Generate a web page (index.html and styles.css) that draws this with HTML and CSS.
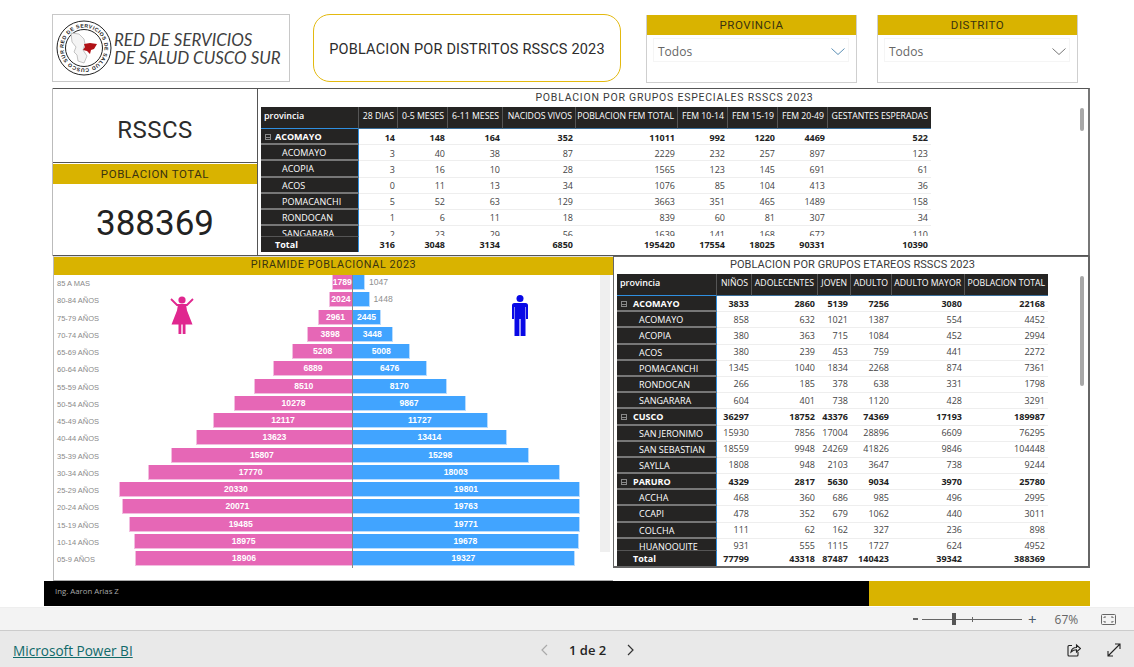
FILE: index.html
```html
<!DOCTYPE html>
<html lang="es">
<head>
<meta charset="utf-8">
<title>Poblacion RSSCS 2023</title>
<link rel="stylesheet" href="styles.css">
</head>
<body>
<main class="report">
  <section class="row-top">
    <div class="logo">
      <svg class="seal" viewBox="0 0 56 56" width="56" height="56">
        <circle cx="28" cy="28" r="27" fill="#fff" stroke="#222" stroke-width="1"/>
        <circle cx="28" cy="28" r="18.5" fill="#fff" stroke="#222" stroke-width="1"/>
        <path id="sealarc" d="M28 28 m-20.5 0 a20.5 20.5 0 1 1 41 0 a20.5 20.5 0 1 1 -41 0" fill="none"/>
        <text class="seal-text"><textPath href="#sealarc" textLength="126">RED DE SERVICIOS DE SALUD CUSCO SUR</textPath></text>
        <path d="M15 13l8 1 5 5 1 5-2 6 4 6-3 7-6-2-1-6-3-3 2-5-4-5z" fill="#f4f4f4" stroke="#aaa" stroke-width=".7"/>
        <path d="M28 24l6-1 7 1-3 5-3 1-1 4-3-3-4-1 2-3z" fill="#b11116"/>
      </svg>
      <p class="logo-text">RED DE SERVICIOS<br>DE SALUD CUSCO SUR</p>
    </div>
    <h1 class="main-title">POBLACION POR DISTRITOS RSSCS 2023</h1>
    <div class="slicer slicer-prov">
      <div class="gold-head">PROVINCIA</div>
      <div class="drop"><span>Todos</span>
        <svg viewBox="0 0 14 7" width="14" height="7"><path d="M.5.5L7 6.5 13.5.5" fill="none" stroke="#5b8fb5" stroke-width="1"/></svg>
      </div>
    </div>
    <div class="slicer slicer-dist">
      <div class="gold-head">DISTRITO</div>
      <div class="drop"><span>Todos</span>
        <svg viewBox="0 0 14 7" width="14" height="7"><path d="M.5.5L7 6.5 13.5.5" fill="none" stroke="#777" stroke-width="1"/></svg>
      </div>
    </div>
  </section>

  <section class="row-mid">
    <div class="kpis">
      <div class="kpi-name">RSSCS</div>
      <div class="gold-head kpi-head">POBLACION TOTAL</div>
      <div class="kpi-value">388369</div>
    </div>
    <div class="panel panel-esp">
      <h2 class="panel-title">POBLACION POR GRUPOS ESPECIALES RSSCS 2023</h2>
      <div class="matrix m1">
        <div class="mrow mhead"><span>provincia</span><span>28 DIAS</span><span>0-5 MESES</span><span>6-11 MESES</span><span>NACIDOS VIVOS</span><span>POBLACION FEM TOTAL</span><span>FEM 10-14</span><span>FEM 15-19</span><span>FEM 20-49</span><span>GESTANTES ESPERADAS</span></div>
        <div class="mbody">
          <div class="mrow parent"><span><i class="minus"></i>ACOMAYO</span><span>14</span><span>148</span><span>164</span><span>352</span><span>11011</span><span>992</span><span>1220</span><span>4469</span><span>522</span></div>
          <div class="mrow"><span>ACOMAYO</span><span>3</span><span>40</span><span>38</span><span>87</span><span>2229</span><span>232</span><span>257</span><span>897</span><span>123</span></div>
          <div class="mrow"><span>ACOPIA</span><span>3</span><span>16</span><span>10</span><span>28</span><span>1565</span><span>123</span><span>145</span><span>691</span><span>61</span></div>
          <div class="mrow"><span>ACOS</span><span>0</span><span>11</span><span>13</span><span>34</span><span>1076</span><span>85</span><span>104</span><span>413</span><span>36</span></div>
          <div class="mrow"><span>POMACANCHI</span><span>5</span><span>52</span><span>63</span><span>129</span><span>3663</span><span>351</span><span>465</span><span>1489</span><span>158</span></div>
          <div class="mrow"><span>RONDOCAN</span><span>1</span><span>6</span><span>11</span><span>18</span><span>839</span><span>60</span><span>81</span><span>307</span><span>34</span></div>
          <div class="mrow"><span>SANGARARA</span><span>2</span><span>23</span><span>29</span><span>56</span><span>1639</span><span>141</span><span>168</span><span>672</span><span>110</span></div>
        </div>
        <div class="mrow mtotal"><span>Total</span><span>316</span><span>3048</span><span>3134</span><span>6850</span><span>195420</span><span>17554</span><span>18025</span><span>90331</span><span>10390</span></div>
      </div>
      <div class="scroll scroll-esp"></div>
    </div>
  </section>

  <section class="row-low">
    <div class="pyramid">
      <div class="gold-head pyr-head">PIRAMIDE POBLACIONAL 2023</div>
      <div class="pyr-body">
        <div class="pyr-rows">
          <div class="bar-row"><span class="age">85 A MAS</span><div class="fem"><b style="width:20.5px">1789</b></div><div class="mal"><b class="short" style="width:12px"></b><em>1047</em></div></div>
          <div class="bar-row"><span class="age">80-84 AÑOS</span><div class="fem"><b style="width:23.2px">2024</b></div><div class="mal"><b class="short" style="width:16.6px"></b><em>1448</em></div></div>
          <div class="bar-row"><span class="age">75-79 AÑOS</span><div class="fem"><b style="width:34px">2961</b></div><div class="mal"><b style="width:28px">2445</b></div></div>
          <div class="bar-row"><span class="age">70-74 AÑOS</span><div class="fem"><b style="width:44.7px">3898</b></div><div class="mal"><b style="width:39.5px">3448</b></div></div>
          <div class="bar-row"><span class="age">65-69 AÑOS</span><div class="fem"><b style="width:59.7px">5208</b></div><div class="mal"><b style="width:57.4px">5008</b></div></div>
          <div class="bar-row"><span class="age">60-64 AÑOS</span><div class="fem"><b style="width:79px">6889</b></div><div class="mal"><b style="width:74.3px">6476</b></div></div>
          <div class="bar-row"><span class="age">55-59 AÑOS</span><div class="fem"><b style="width:97.6px">8510</b></div><div class="mal"><b style="width:93.7px">8170</b></div></div>
          <div class="bar-row"><span class="age">50-54 AÑOS</span><div class="fem"><b style="width:117.9px">10278</b></div><div class="mal"><b style="width:113.2px">9867</b></div></div>
          <div class="bar-row"><span class="age">45-49 AÑOS</span><div class="fem"><b style="width:139px">12117</b></div><div class="mal"><b style="width:134.5px">11727</b></div></div>
          <div class="bar-row"><span class="age">40-44 AÑOS</span><div class="fem"><b style="width:156.3px">13623</b></div><div class="mal"><b style="width:153.9px">13414</b></div></div>
          <div class="bar-row"><span class="age">35-39 AÑOS</span><div class="fem"><b style="width:181.3px">15807</b></div><div class="mal"><b style="width:175.5px">15298</b></div></div>
          <div class="bar-row"><span class="age">30-34 AÑOS</span><div class="fem"><b style="width:203.8px">17770</b></div><div class="mal"><b style="width:206.5px">18003</b></div></div>
          <div class="bar-row"><span class="age">25-29 AÑOS</span><div class="fem"><b style="width:233.2px">20330</b></div><div class="mal"><b style="width:227.1px">19801</b></div></div>
          <div class="bar-row"><span class="age">20-24 AÑOS</span><div class="fem"><b style="width:230.2px">20071</b></div><div class="mal"><b style="width:226.7px">19763</b></div></div>
          <div class="bar-row"><span class="age">15-19 AÑOS</span><div class="fem"><b style="width:223.5px">19485</b></div><div class="mal"><b style="width:226.8px">19771</b></div></div>
          <div class="bar-row"><span class="age">10-14 AÑOS</span><div class="fem"><b style="width:217.6px">18975</b></div><div class="mal"><b style="width:225.7px">19678</b></div></div>
          <div class="bar-row"><span class="age">05-9 AÑOS</span><div class="fem"><b style="width:216.9px">18906</b></div><div class="mal"><b style="width:221.7px">19327</b></div></div>
        </div>
        <div class="pyr-scroll"></div>
        <svg class="ico-woman" viewBox="0 0 24 39" width="24" height="39">
          <circle cx="12" cy="4" r="3.6" fill="#e0278f"/>
          <path d="M1 3l6 6h10l6-6" fill="none" stroke="#e0278f" stroke-width="1.8"/>
          <path d="M8 8.500h8l1 6 5.500 14H1.500L7 14.500z" fill="#e0278f"/>
          <path d="M8.500 28h2.800v10H8.500zM12.700 28h2.800v10h-2.800z" fill="#e0278f"/>
        </svg>
        <svg class="ico-man" viewBox="0 0 16 41" width="16" height="41">
          <circle cx="8" cy="3.500" r="3.500" fill="#0808e6"/>
          <path d="M2.500 8h11A2.500 2.500 0 0 1 16 10.500V24h-2V12h-.5v29H8.600V24h-1.200v17H2.500V12H2v12H0V10.500A2.500 2.500 0 0 1 2.500 8z" fill="#0808e6"/>
        </svg>
      </div>
    </div>
    <div class="panel-wrap">
      <div class="panel panel-eta">
        <h2 class="panel-title">POBLACION POR GRUPOS ETAREOS RSSCS 2023</h2>
        <div class="matrix m2">
          <div class="mrow mhead"><span>provincia</span><span>NIÑOS</span><span>ADOLECENTES</span><span>JOVEN</span><span>ADULTO</span><span>ADULTO MAYOR</span><span>POBLACION TOTAL</span></div>
          <div class="mbody">
            <div class="mrow parent"><span><i class="minus"></i>ACOMAYO</span><span>3833</span><span>2860</span><span>5139</span><span>7256</span><span>3080</span><span>22168</span></div>
            <div class="mrow"><span>ACOMAYO</span><span>858</span><span>632</span><span>1021</span><span>1387</span><span>554</span><span>4452</span></div>
            <div class="mrow"><span>ACOPIA</span><span>380</span><span>363</span><span>715</span><span>1084</span><span>452</span><span>2994</span></div>
            <div class="mrow"><span>ACOS</span><span>380</span><span>239</span><span>453</span><span>759</span><span>441</span><span>2272</span></div>
            <div class="mrow"><span>POMACANCHI</span><span>1345</span><span>1040</span><span>1834</span><span>2268</span><span>874</span><span>7361</span></div>
            <div class="mrow"><span>RONDOCAN</span><span>266</span><span>185</span><span>378</span><span>638</span><span>331</span><span>1798</span></div>
            <div class="mrow"><span>SANGARARA</span><span>604</span><span>401</span><span>738</span><span>1120</span><span>428</span><span>3291</span></div>
            <div class="mrow parent"><span><i class="minus"></i>CUSCO</span><span>36297</span><span>18752</span><span>43376</span><span>74369</span><span>17193</span><span>189987</span></div>
            <div class="mrow"><span>SAN JERONIMO</span><span>15930</span><span>7856</span><span>17004</span><span>28896</span><span>6609</span><span>76295</span></div>
            <div class="mrow"><span>SAN SEBASTIAN</span><span>18559</span><span>9948</span><span>24269</span><span>41826</span><span>9846</span><span>104448</span></div>
            <div class="mrow"><span>SAYLLA</span><span>1808</span><span>948</span><span>2103</span><span>3647</span><span>738</span><span>9244</span></div>
            <div class="mrow parent"><span><i class="minus"></i>PARURO</span><span>4329</span><span>2817</span><span>5630</span><span>9034</span><span>3970</span><span>25780</span></div>
            <div class="mrow"><span>ACCHA</span><span>468</span><span>360</span><span>686</span><span>985</span><span>496</span><span>2995</span></div>
            <div class="mrow"><span>CCAPI</span><span>478</span><span>352</span><span>679</span><span>1062</span><span>440</span><span>3011</span></div>
            <div class="mrow"><span>COLCHA</span><span>111</span><span>62</span><span>162</span><span>327</span><span>236</span><span>898</span></div>
            <div class="mrow"><span>HUANOQUITE</span><span>931</span><span>555</span><span>1115</span><span>1727</span><span>624</span><span>4952</span></div>
          </div>
          <div class="mrow mtotal"><span>Total</span><span>77799</span><span>43318</span><span>87487</span><span>140423</span><span>39342</span><span>388369</span></div>
        </div>
        <div class="scroll scroll-eta"></div>
      </div>
    </div>
  </section>

  <footer class="report-foot">
    <div class="foot-black">Ing. Aaron Arias Z</div>
    <div class="foot-gold"></div>
  </footer>
</main>

<div class="zoombar">
  <span class="z-minus"></span>
  <div class="z-track"><i class="z-tick"></i><i class="z-thumb"></i></div>
  <span class="z-plus">+</span>
  <span class="z-pct">67%</span>
  <svg class="z-fit" viewBox="0 0 15 11" width="15" height="11"><rect x=".5" y=".5" width="14" height="10" rx="1" fill="none" stroke="#666"/><path d="M3 4V3h2M10 3h2v1M12 7v1h-2M5 8H3V7" fill="none" stroke="#666"/></svg>
</div>

<nav class="pbi-bar">
  <a class="pbi-link" href="#">Microsoft Power BI</a>
  <div class="pager">
    <svg viewBox="0 0 7 12" width="7" height="12"><path d="M6 1L1 6l5 5" fill="none" stroke="#aaa" stroke-width="1.200"/></svg>
    <span>1 de 2</span>
    <svg viewBox="0 0 7 12" width="7" height="12"><path d="M1 1l5 5-5 5" fill="none" stroke="#333" stroke-width="1.200"/></svg>
  </div>
  <div class="pbi-actions">
    <svg viewBox="0 0 14 14" width="14" height="14"><path d="M5 2.500H2a1 1 0 0 0-1 1v8.500a1 1 0 0 0 1 1h8a1 1 0 0 0 1-1V9" fill="none" stroke="#222" stroke-width="1.100"/><path d="M4 9c.5-3 2.500-4.500 5.500-4.500V2L13.500 5.500 9.500 9V6.700C7 6.700 5.500 7.500 4 9z" fill="none" stroke="#222" stroke-width="1.100"/></svg>
    <svg viewBox="0 0 14 14" width="14" height="14"><path d="M1 13L13 1M8 1h5v5M1 8v5h5" fill="none" stroke="#222" stroke-width="1.100"/></svg>
  </div>
</nav>
</body>
</html>
```
FILE: styles.css
```css
* { box-sizing: border-box; }
html, body { margin: 0; padding: 0; }
body {
  width: 1134px;
  height: 667px;
  overflow: hidden;
  background: #fff;
  display: flex;
  flex-direction: column;
  font-family: "Open Sans", "Noto Sans", sans-serif;
}
h1, h2, p { margin: 0; font-weight: normal; }

.report { height: 607px; padding-top: 14px; display: flex; flex-direction: column; background: #fff; }

/* top row */
.row-top { display: flex; height: 68px; margin-left: 52px; align-items: flex-start; }
.logo {
  width: 238px; height: 68px;
  border: 1px solid #c8c8c8;
  display: flex; align-items: center;
  padding-left: 3px;
}
.seal { flex: none; }
.seal-text { font: 700 5.200px "Liberation Sans", sans-serif; fill: #222; }
.logo-text {
  margin-left: 2px;
  padding-top: 2px;
  font: italic 400 16.900px/18px "Lato", sans-serif;
  color: #404040;
  white-space: nowrap;
}
.main-title {
  width: 308px; height: 68px;
  margin-left: 23px;
  padding-top: 2px;
  border: 1.500px solid #e3b90f;
  border-radius: 17px;
  display: flex; align-items: center; justify-content: center;
  font: 400 14.500px "Roboto", sans-serif;
  letter-spacing: .2px;
  color: #2c2c2c;
  white-space: nowrap;
}
.slicer { height: 68px; margin-top: 1px; border: 1px solid #cfcfcf; border-top: 0; background: #fff; }
.slicer-prov { width: 211px; margin-left: 25px; }
.slicer-dist { width: 201px; margin-left: 20px; }
.gold-head {
  background: #d9b300;
  color: #3a3310;
  text-align: center;
  font: 400 11.500px/20px "Roboto", sans-serif;
  letter-spacing: .55px;
}
.drop {
  margin: 3px 7px 0 6px;
  height: 24px;
  padding: 2px 3px 0 4px;
  border: 1px solid #f5f5f5;
  display: flex; align-items: center; justify-content: space-between;
  font: 400 12px "Open Sans", sans-serif;
  color: #666;
}

/* middle row */
.row-mid { display: flex; height: 168px; margin-left: 52px; margin-top: 6px; }
.kpis { width: 205px; display: flex; flex-direction: column; border-left: 1px solid #bbb; }
.kpi-name {
  height: 75px;
  padding-top: 8px;
  border-top: 1px solid #555; border-bottom: 1px solid #555;
  display: flex; align-items: center; justify-content: center;
  font: 400 24px "Roboto", sans-serif;
  letter-spacing: .5px;
  color: #2c2c2c;
}
.kpi-head { height: 20px; margin-top: 1px; flex: none; }
.kpi-value {
  flex: 1;
  padding-top: 8px;
  border-bottom: 1px solid #555;
  display: flex; align-items: center; justify-content: center;
  font: 400 35px "Roboto", sans-serif;
  letter-spacing: 0;
  color: #222;
}
.panel { position: relative; background: #fff; border: 1px solid #555; }
.panel-esp { width: 833px; padding-left: 3px; border-right-width: 2px; border-right-color: #777; }
.panel-title {
  text-align: center;
  font: 400 10.500px/18px "Roboto", sans-serif;
  letter-spacing: .76px;
  color: #3a3a3a;
  white-space: nowrap;
}
.panel-esp .panel-title { height: 18px; }

/* matrix */
.matrix { font: 400 9px/16px "Open Sans", sans-serif; color: #444; }
.m1 { width: 670px; }
.m2 { width: 431px; }
.mrow { display: grid; grid-template-rows: 100%; height: 16.200px; }
.m1 .mrow { grid-template-columns: 98px 39px 50px 55px 73px 102px 50px 50px 50px 103px; }
.m2 .mrow { grid-template-columns: 100px 35px 66px 33px 41px 73px 83px; }
.mrow > span {
  text-align: right;
  padding: .5px 3px 0 0;
  line-height: 14.700px;
  border-bottom: 1px solid #eee;
  white-space: nowrap;
}
.mrow > span:first-child {
  text-align: left;
  background: #252423;
  color: #fff;
  padding-left: 21px;
  padding-top: 1px;
  border-bottom: 2px solid #777;
  border-right: 1px solid #2f8fe0;
  line-height: 13.200px;
}
.m1 .mbody .mrow > span { padding-top: 1.500px; line-height: 13.700px; }
.m1 .mbody .mrow > span:first-child { padding-top: 2px; line-height: 12.200px; }
.m2 .mrow > span:first-child { padding-left: 22px; }
.mrow.parent > span { font-weight: 700; color: #222; }
.mrow.parent > span:first-child { color: #fff; padding-left: 4px; }
.minus {
  display: inline-block;
  width: 6px; height: 6px;
  margin-right: 4px;
  border: 1px solid #888;
  background: linear-gradient(#888, #888) center / 4px 1px no-repeat;
  vertical-align: 0;
}
.m2 .mrow.parent > span:first-child { padding-left: 4px; }
.m2 .minus { margin-right: 6px; }
.mhead { height: 22px; background: #252423; }
.mhead > span,
.mhead > span:first-child {
  color: #fff;
  font-weight: 400;
  text-align: right;
  line-height: 16px;
  font-size: 8.700px;
  border-bottom: 1px solid #3b6f9a;
  border-right: 1px solid #555;
  padding-top: 1px;
}
.mhead > span:first-child,
.m2 .mhead > span:first-child {
  text-align: left;
  padding-left: 3px;
  line-height: 16px;
  border-bottom: 1px solid #2f8fe0;
  font-size: 9px;
  font-weight: 600;
}
.mhead > span:last-child { border-right: 0; }
.m1 .mbody { height: 107px; overflow: hidden; }
.m2 .mbody { height: 254px; overflow: hidden; }
.mtotal { height: 16px; }
.mtotal > span { font-weight: 700; color: #222; border-bottom: 0; line-height: 15px; }
.mtotal > span:first-child {
  border-top: 1px solid #555;
  border-bottom: 0;
  padding-left: 14px;
  padding-top: 0;
  line-height: 15px;
}
.m2 .mtotal > span:first-child { padding-left: 16px; }
.scroll { position: absolute; background: #a8a8a8; width: 4px; border-radius: 2px; }
.scroll-esp { right: 4px; top: 19px; height: 23px; }
.scroll-eta { right: 4px; top: 19px; height: 110px; }

/* lower row */
.row-low { display: flex; height: 325px; margin-left: 53px; }
.pyramid { width: 560px; display: flex; flex-direction: column; border-left: 1px solid #bbb; border-bottom: 1px solid #aaa; border-top: 1px solid #ddd; }
.pyr-head { height: 18px; line-height: 16px; flex: none; font-size: 10.800px; letter-spacing: .6px; }
.pyr-body { position: relative; flex: 1; display: flex; }
.pyr-rows { width: 546px; display: grid; grid-auto-rows: 17.250px; align-content: start; }
.bar-row { display: grid; grid-template-columns: 63px 236px 247px; height: 17.250px; }
.age { padding-left: 3px; font: 400 7.500px/17px "Liberation Sans", sans-serif; color: #8a8a8a; white-space: nowrap; }
.fem, .mal { display: flex; align-items: flex-start; font: 700 8.600px/14.500px "Liberation Sans", sans-serif; color: #fff; }
.fem { justify-content: flex-end; border-right: 1px solid #888; }
.bar-row b {
  display: block;
  height: 15px;
  text-align: center;
  font-weight: 700;
  white-space: nowrap;
}
.fem b { background: #e667b6; border: 1px solid #f2bddf; border-right: 0; border-top: 0; }
.mal b { background: #41a4ff; border: 1px solid #b8dcff; border-left: 0; border-top: 0; }
.mal em { margin-left: 4px; font-style: normal; font-weight: 400; color: #8f8f8f; }
.pyr-scroll { width: 10px; height: 277px; background: #efefef; }
.ico-woman { position: absolute; left: 116px; top: 21px; }
.ico-man { position: absolute; left: 458px; top: 20px; }

.panel-wrap { width: 477px; }
.panel-eta { height: 312px; padding-left: 3px; border-width: 1px 2px 2px 1px; border-color: #666; }
.panel-eta .panel-title { height: 17px; font-size: 11px; letter-spacing: .07px; line-height: 15px; }

/* footer strip */
.report-foot { display: flex; height: 25px; margin-left: 44px; width: 1046px; }
.foot-black { width: 825px; background: #000; color: #a8a8a8; padding-left: 11px; font: 400 7.800px/21px "Open Sans", sans-serif; }
.foot-gold { flex: 1; background: #d9b300; }

/* zoom bar */
.zoombar {
  height: 24px;
  background: #f3f3f3;
  border-bottom: 1px solid #ccc;
  border-top: 1px solid #eee;
  display: flex; align-items: center;
  padding-left: 913px;
  color: #555;
}
.z-minus { width: 5px; height: 2px; background: #666; margin-right: 4px; }
.z-track { position: relative; width: 100px; height: 1px; background: #666; }
.z-thumb { position: absolute; left: 30px; top: -6px; width: 4px; height: 12px; background: #555; }
.z-tick { position: absolute; left: 50px; top: -2px; width: 1px; height: 5px; background: #666; }
.z-plus { margin-left: 6px; font: 400 15px/1 "Open Sans", sans-serif; color: #4a5a6a; }
.z-pct { margin-left: 18px; font: 400 12px "Open Sans", sans-serif; color: #666; }
.z-fit { margin-left: 23px; }

/* report bar */
.pbi-bar {
  flex: 1;
  background: #e9e9e9;
  display: flex; align-items: center;
  padding: 2px 0 0 13px;
}
.pbi-link { font: 400 13.600px "Open Sans", sans-serif; color: #106a6a; text-decoration: underline; width: 528px; flex: none; white-space: nowrap; }
.pager { display: flex; align-items: center; gap: 21px; font: 600 13px "Open Sans", sans-serif; color: #252423; }
.pbi-actions { margin-left: auto; margin-right: 13px; display: flex; gap: 26px; }
```
